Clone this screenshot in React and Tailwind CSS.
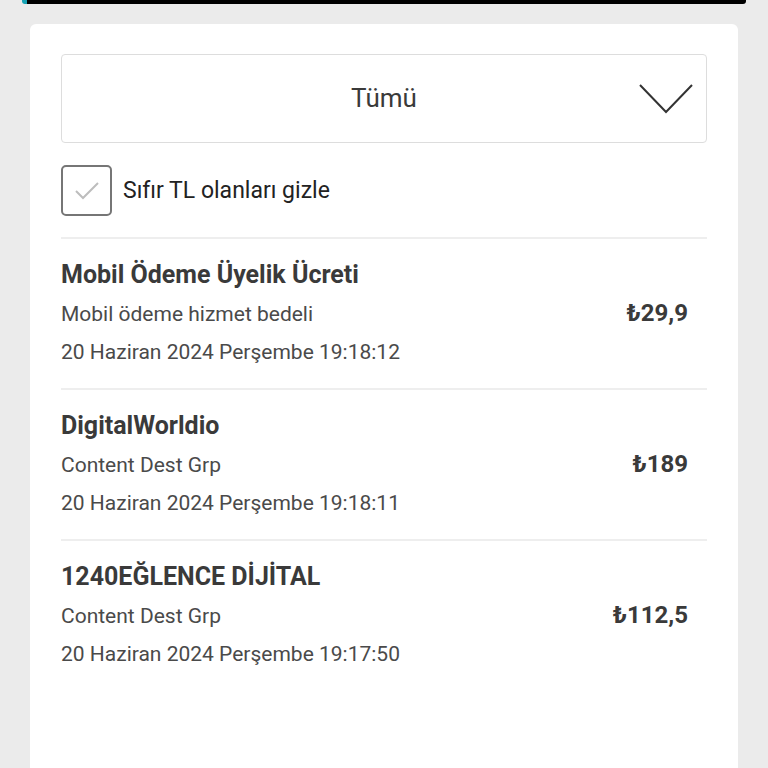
const items = [
  {
    title: 'Mobil Ödeme Üyelik Ücreti',
    desc: 'Mobil ödeme hizmet bedeli',
    date: '20 Haziran 2024 Perşembe 19:18:12',
    price: '₺29,9',
  },
  {
    title: 'DigitalWorldio',
    desc: 'Content Dest Grp',
    date: '20 Haziran 2024 Perşembe 19:18:11',
    price: '₺189',
  },
  {
    title: '1240EĞLENCE DİJİTAL',
    desc: 'Content Dest Grp',
    date: '20 Haziran 2024 Perşembe 19:17:50',
    price: '₺112,5',
  },
];

const App = () => {
  return (
    <div className="min-h-[768px] bg-[#ebebeb] font-['Roboto',sans-serif] text-[#333]">
      <div className="mx-[22px] h-[4px] rounded-b-[3px] bg-black border-l-[5px] border-[#17a3b5]" />
      <div className="mx-[30px] mt-[20px] min-h-[744px] rounded-t-[6px] bg-white px-[31px] pt-[30px]">
        {/* Filter dropdown */}
        <div className="relative flex h-[89px] items-center justify-center rounded-[4px] border border-[#dddddd]">
          <span className="text-[26px] text-[#3a3a3a]">Tümü</span>
          <svg className="absolute right-[13px] top-[29px]" width="54" height="30" viewBox="0 0 54 30" fill="none">
            <path d="M1 1 L27 28 L53 1" stroke="#333" strokeWidth="2" />
          </svg>
        </div>

        {/* Hide zero checkbox */}
        <div className="mt-[22px] flex items-center gap-[11px]">
          <div className="flex h-[51px] w-[51px] items-center justify-center rounded-[5px] border-2 border-[#767676]">
            <svg width="26" height="20" viewBox="0 0 26 20" fill="none">
              <path d="M2 10 L9 17 L24 2" stroke="#bdbdbd" strokeWidth="2" />
            </svg>
          </div>
          <span className="pt-[2px] text-[23px] text-[#222]">Sıfır TL olanları gizle</span>
        </div>

        <div className="mt-[21px] border-t-2 border-[#eeeeee]">
          {items.map((item) => (
            <div key={item.title} className="flex items-center border-b-2 border-[#eeeeee] pt-[20px] pb-[21px] last:border-b-0">
              <div className="flex-1">
                <div className="text-[25px] font-bold leading-[32px] text-[#3a3a3a]">{item.title}</div>
                <div className="mt-[8px] text-[21px] leading-[30px] text-[#4a4a4a]">{item.desc}</div>
                <div className="mt-[8px] text-[21px] leading-[30px] text-[#4a4a4a]">{item.date}</div>
              </div>
              <div className="pr-[19px] text-[24px] font-bold text-[#3a3a3a]">{item.price}</div>
            </div>
          ))}
        </div>
      </div>
    </div>
  );
};

export default App;
